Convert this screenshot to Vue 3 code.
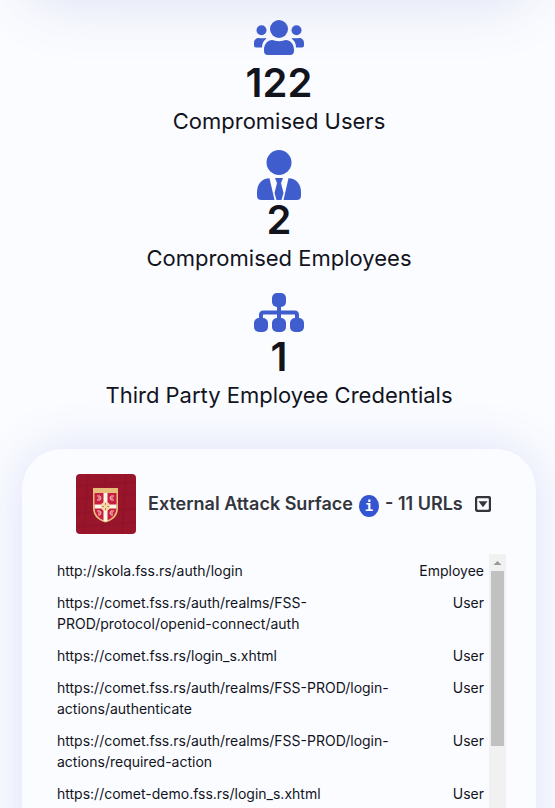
<script setup>
import { ref } from 'vue'

const stats = [
  { icon: 'users', value: 122, label: 'Compromised Users' },
  { icon: 'employee', value: 2, label: 'Compromised Employees' },
  { icon: 'network', value: 1, label: 'Third Party Employee Credentials' },
]

const open = ref(true)

const urls = [
  { url: 'http://skola.fss.rs/auth/login', type: 'Employee' },
  { url: 'https://comet.fss.rs/auth/realms/FSS-PROD/protocol/openid-connect/auth', type: 'User' },
  { url: 'https://comet.fss.rs/login_s.xhtml', type: 'User' },
  { url: 'https://comet.fss.rs/auth/realms/FSS-PROD/login-actions/authenticate', type: 'User' },
  { url: 'https://comet.fss.rs/auth/realms/FSS-PROD/login-actions/required-action', type: 'User' },
  { url: 'https://comet-demo.fss.rs/login_s.xhtml', type: 'User' },
]
</script>

<template>
  <main class="page">
    <div class="panel previous" aria-hidden="true"></div>

    <section class="stats">
      <div v-for="s in stats" :key="s.label" class="stat">
        <svg v-if="s.icon === 'users'" class="stat-icon" viewBox="0 0 50 50" aria-hidden="true">
          <circle cx="25" cy="16" r="9" />
          <circle cx="7.5" cy="17.3" r="5" />
          <circle cx="42.5" cy="17.3" r="5" />
          <path d="M10 38V36.500C10 31 14 27 18 27c2 0 4 1.300 7 1.300S30 27 32 27c4 0 8 4 8 9.500V38q0 4-4 4H14q-4 0-4-4z" />
          <path d="M5 25c2 0 4 .6 6 0l1.500.6C9.500 27.500 8 31 8 34.500H2q-2 0-2-2V30c0-3 2-5 5-5z" />
          <path d="M45 25c-2 0-4 .6-6 0l-1.500.6C40.500 27.500 42 31 42 34.500h6q2 0 2-2V30c0-3-2-5-5-5z" />
        </svg>
        <svg v-else-if="s.icon === 'employee'" class="stat-icon" viewBox="0 0 50 50" aria-hidden="true">
          <circle cx="25" cy="12.500" r="12.500" />
          <path d="M15.500 28.200 20.500 50H7.500Q3 50 3 45.500V42C3 34 8 28.400 15.500 28.200z" />
          <path d="M34.500 28.200 29.500 50h13q4.500 0 4.500-4.500V42c0-8-5-13.600-12.500-13.800z" />
          <path d="M21 28h8l-2 5 2.500 10L27.500 50h-5l-2-7L23 33z" />
        </svg>
        <svg v-else class="stat-icon" viewBox="0 0 50 50" aria-hidden="true">
          <rect x="18" y="6" width="14" height="14" rx="5" />
          <rect x="0" y="31" width="14" height="14" rx="5" />
          <rect x="18" y="31" width="14" height="14" rx="5" />
          <rect x="36" y="31" width="14" height="14" rx="5" />
          <path class="wire" d="M25 18v15M7 32v-4q0-2.500 2.500-2.500h31Q43 25.500 43 28v4" />
        </svg>
        <strong class="value">{{ s.value }}</strong>
        <span class="label">{{ s.label }}</span>
      </div>
    </section>

    <section class="panel surface">
      <header class="heading">
        <svg class="crest" viewBox="0 0 60 60" role="img" aria-label="FSS crest">
          <rect width="60" height="60" rx="4" fill="#98152b" />
          <path d="M0 12 60 8M0 25 60 20M0 39 60 35M0 53 60 48M12 0 8 60M30 0 26 60M50 0 46 60" stroke="#8a1127" stroke-width="2" opacity=".35" />
          <path d="M17 14h25v20q0 11-12.500 14.500Q17 45 17 34z" fill="#e6bd7b" />
          <path d="M18.500 19h22v15q0 9.500-11 13-11-3.500-11-13z" fill="#c7213f" />
          <path d="M27.500 19h4v28l-2 .500-2-.500zM18.500 30.500h22v4h-22z" fill="#fff6e8" />
          <circle cx="29.500" cy="32.500" r="4.500" fill="#f5d9a8" />
          <path d="M29.500 29v7M26 32.500h7" stroke="#b98a55" stroke-dasharray="2 3" />
          <path d="M21 22h3q2 2 0 4h-3m3-2h-2M38 22h-3q-2 2 0 4h3m-3-2h2M21 37h3q2 2 0 4h-2m2-2h-2M38 37h-3q-2 2 0 4h2m-2-2h2" fill="none" stroke="#f5c9c4" stroke-width="1" />
        </svg>
        <h2 class="title">
          External Attack Surface
          <button type="button" class="info" aria-label="Information">i</button>
          - 11 URLs
        </h2>
        <button type="button" class="toggle" aria-label="Toggle list" :aria-expanded="open" @click="open = !open">
          <svg viewBox="0 0 16 16" aria-hidden="true">
            <rect x="1" y="1" width="14" height="14" rx="2" fill="none" stroke="currentColor" stroke-width="2.400" />
            <path d="M3.500 5.300h9L8 11.200z" fill="currentColor" />
          </svg>
        </button>
      </header>

      <div v-if="open" class="list">
        <table class="urls">
          <tbody>
            <tr v-for="u in urls" :key="u.url">
              <td class="url">{{ u.url }}</td>
              <td class="type">{{ u.type }}</td>
            </tr>
          </tbody>
        </table>
        <div class="track" aria-hidden="true">
          <svg class="arrow" viewBox="0 0 17 17"><path d="M4.500 11 8.500 7l4 4z" fill="#989898" /></svg>
          <div class="thumb"></div>
        </div>
      </div>
    </section>
  </main>
</template>

<style>
body {
  background: #fbfcff;
}
</style>

<style scoped>
.page {
  box-sizing: border-box;
  height: 100vh;
  overflow: hidden;
  padding: 0 19px 0 22px;
  font-family: Inter, "Liberation Sans", sans-serif;
  color: #12141d;
  background: #fbfcff;
}

.panel {
  border-radius: 40px;
  background: #fbfcff;
  box-shadow: 0 0 50px rgba(65, 90, 210, 0.16);
}

.previous {
  height: 100px;
  margin-top: -104px;
  box-shadow: 0 8px 60px rgba(60, 85, 180, 0.16);
}

.stats {
  display: flex;
  flex-direction: column;
  gap: 11px;
  padding: 17px 0 36px;
}

.stat {
  display: flex;
  flex-direction: column;
  align-items: center;
}

.stat-icon {
  width: 50px;
  height: 50px;
  fill: #3f5dcd;
}

.wire {
  fill: none;
  stroke: #3f5dcd;
  stroke-width: 4;
}

.value {
  font-size: 40px;
  font-weight: 600;
  line-height: 40px;
}

.label {
  font-size: 22px;
  line-height: 36px;
}

.surface {
  padding: 25px 30px 40px 35px;
}

.heading {
  display: flex;
  align-items: center;
  gap: 12px;
  padding-left: 19px;
  margin-bottom: 20px;
}

.crest {
  flex: none;
  width: 60px;
  height: 60px;
}

.title {
  display: flex;
  align-items: center;
  gap: 6px;
  margin: 0;
  font-size: 18px;
  font-weight: 600;
  line-height: 24px;
  color: #33353d;
  white-space: nowrap;
}

.info {
  width: 20px;
  height: 22px;
  margin-top: 4px;
  padding: 0;
  border: 0;
  border-radius: 50%;
  background: #3454d1;
  color: #fff;
  font: bold 14px/20px "DejaVu Sans Mono", monospace;
}

.toggle {
  width: 16px;
  height: 16px;
  padding: 0;
  border: 0;
  background: none;
  color: #33353d;
}

.toggle svg {
  display: block;
}

.list {
  display: flex;
  gap: 5px;
  min-height: 320px;
}

.urls {
  flex: 1;
  align-self: flex-start;
  border-collapse: collapse;
  font-size: 14px;
  line-height: 21px;
}

.urls td {
  padding: 6px 0 5px;
  vertical-align: top;
}

.url {
  padding-right: 16px;
}

.type {
  text-align: right;
}

.track {
  width: 17px;
  background: #f1f1f1;
}

.arrow {
  display: block;
  width: 17px;
  height: 17px;
}

.thumb {
  height: 175px;
  margin: 0 2px;
  background: #c1c1c1;
}
</style>
